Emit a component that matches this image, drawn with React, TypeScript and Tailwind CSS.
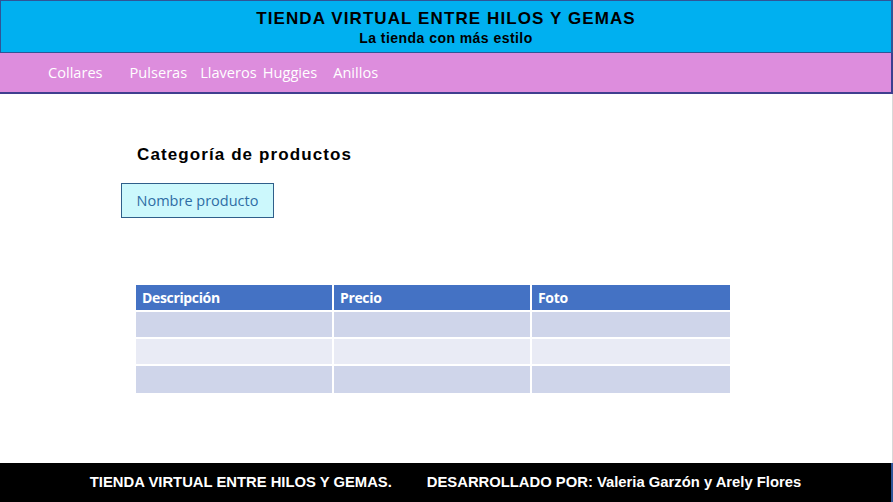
const navItems = ['Collares', 'Pulseras', 'Llaveros', 'Huggies', 'Anillos']

const rows = ['bg-[#cfd5ea]', 'bg-[#e9ebf5]', 'bg-[#cfd5ea]']

export default function App() {
  return (
    <div className="flex h-[502px] w-[893px] flex-col bg-white font-['Liberation_Sans',Arial,sans-serif]">
      <header className="h-[53px] border border-r-2 border-[#2f5597] bg-[#00b0f0] pt-[8px] text-center text-black">
        <h1 className="text-[17px] font-bold leading-[20px] tracking-[1.1px]">TIENDA VIRTUAL ENTRE HILOS Y GEMAS</h1>
        <p className="mt-[1px] text-[14px] font-bold leading-[16px] tracking-[0.45px]">La tienda con más estilo</p>
      </header>

      <nav className="flex h-[41px] items-center border-b-2 border-r-2 border-[#3f3f8f] bg-[#dd8ddd] pl-[48px] font-['Open_Sans',sans-serif] text-[14.6px] text-white">
        <span className="mr-[27px]">{navItems[0]}</span>
        <span className="mr-[13px]">{navItems[1]}</span>
        <span className="mr-[6px]">{navItems[2]}</span>
        <span className="mr-[16px]">{navItems[3]}</span>
        <span>{navItems[4]}</span>
      </nav>

      <main className="flex-1 border-r border-[#d9d9d9]">
        <h2 className="ml-[137px] mt-[51px] text-[17px] font-bold leading-[20px] tracking-[1.1px] text-black">Categoría de productos</h2>
        <div className="ml-[121px] mt-[18px] flex h-[35px] w-[153px] items-center justify-center border border-[#2f5f8a] bg-[#ccf8fc] font-['Open_Sans',sans-serif] text-[14.5px] text-[#2e6da4]">
          Nombre producto
        </div>

        <table className="ml-[136px] mt-[67px] w-[594px] border-separate border-spacing-0 font-['Open_Sans',sans-serif] text-[14px]">
          <thead>
            <tr className="bg-[#4472c4] text-left text-white">
              {['Descripción', 'Precio', 'Foto'].map((h, i) => (
                <th
                  key={h}
                  className={`h-[27px] border-b-2 border-white pl-[6px] font-bold tracking-tight ${i < 2 ? 'border-r-2' : ''}`}
                >
                  {h}
                </th>
              ))}
            </tr>
          </thead>
          <tbody>
            {rows.map((bg, r) => (
              <tr key={r} className={bg}>
                {[0, 1, 2].map((c) => (
                  <td
                    key={c}
                    className={`h-[27px] ${r < 2 ? 'border-b-2' : ''} ${c < 2 ? 'border-r-2' : ''} w-1/3 border-white`}
                  ></td>
                ))}
              </tr>
            ))}
          </tbody>
        </table>
      </main>

      <footer className="flex h-[39px] items-center justify-center border-r-2 border-[#2f5597] bg-black text-[14.8px] font-bold text-white">
        <span>TIENDA VIRTUAL ENTRE HILOS Y GEMAS.</span>
        <span className="ml-[35px]">DESARROLLADO POR: Valeria Garzón y Arely Flores</span>
      </footer>
    </div>
  )
}
